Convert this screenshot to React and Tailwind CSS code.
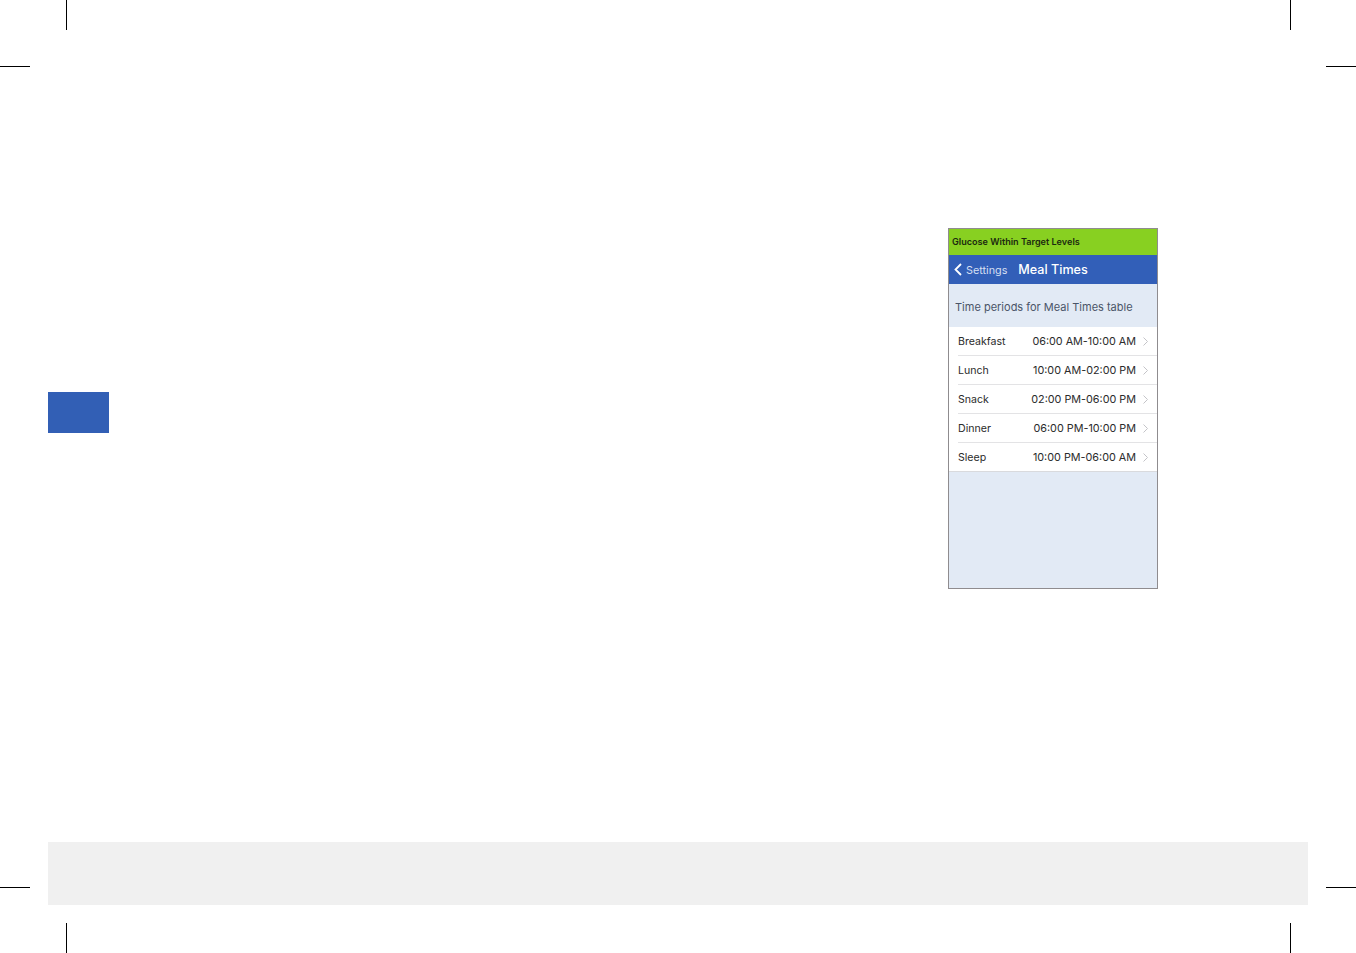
const periods = [
  { name: "Breakfast", time: "06:00 AM-10:00 AM" },
  { name: "Lunch", time: "10:00 AM-02:00 PM" },
  { name: "Snack", time: "02:00 PM-06:00 PM" },
  { name: "Dinner", time: "06:00 PM-10:00 PM" },
  { name: "Sleep", time: "10:00 PM-06:00 AM" },
];

// printer's crop marks sit on the page canvas itself
const cropMarks = [
  "left-[66px] top-0 w-px h-[30px]",
  "left-[1290px] top-0 w-px h-[30px]",
  "left-0 top-[66px] w-[30px] h-px",
  "left-[1326px] top-[66px] w-[30px] h-px",
  "left-0 top-[887px] w-[30px] h-px",
  "left-[1326px] top-[887px] w-[30px] h-px",
  "left-[66px] top-[923px] w-px h-[30px]",
  "left-[1290px] top-[923px] w-px h-[30px]",
];

const BackChevron = () => (
  <svg width="8" height="13" viewBox="0 0 8 13" fill="none" className="ml-[5px] shrink-0">
    <path d="M7 1 L1.5 6.5 L7 12" stroke="#ffffff" strokeWidth="1.8" />
  </svg>
);

const RowChevron = () => (
  <svg width="5" height="9" viewBox="0 0 5 9" fill="none" className="shrink-0">
    <path d="M0.5 0.5 L4.5 4.5 L0.5 8.5" stroke="#c4c4c8" strokeWidth="1" />
  </svg>
);

const PeriodRow = ({ name, time, last }) => (
  <div className={`flex h-[29px] items-center pl-[9px] ${last ? "border-b border-[#d9dadd]" : ""}`}>
    <div className={`flex h-full flex-1 items-center justify-between pr-[9px] ${last ? "" : "border-b border-[#e3e3e5]"}`}>
      <span className="pt-[2px] text-[10.6px] text-[#2b2b2b]">{name}</span>
      <div className="flex items-center gap-[7px]">
        <span className="pt-[2px] text-[10.8px] text-[#2b2b2b]">{time}</span>
        <RowChevron />
      </div>
    </div>
  </div>
);

export default function App() {
  return (
    <div className="relative flex h-[953px] w-full flex-col overflow-hidden bg-white px-[48px] font-['Inter',sans-serif]">
      {cropMarks.map((cls) => (
        <div key={cls} className={`absolute bg-black ${cls}`} />
      ))}

      <div className="flex items-start pt-[228px]">
        <div className="mt-[164px] h-[41px] w-[61px] bg-[#325fb5]" />

        <div className="ml-[839px] flex h-[361px] w-[210px] flex-col border border-[#8f8c8f] bg-[#e2eaf5] text-[11px]">
          <div className="flex h-[26px] items-center bg-[#88d021] pl-[3px] text-[9.1px] font-semibold text-[#1c2a10]">
            Glucose Within Target Levels
          </div>
          <div className="flex h-[29px] items-center bg-[#325fb8] text-white">
            <BackChevron />
            <span className="ml-[4px] mt-[4px] text-[10.8px] text-[#d5dff2]">Settings</span>
            <span className="ml-[11px] mt-[2px] text-[12.6px] font-medium">Meal Times</span>
          </div>
          <div className="flex h-[43px] items-center pl-[6px] pt-[3px] text-[#4a5568]">
            Time periods for Meal Times table
          </div>
          <div className="bg-white">
            {periods.map((p, i) => (
              <PeriodRow key={p.name} name={p.name} time={p.time} last={i === periods.length - 1} />
            ))}
          </div>
        </div>
      </div>

      <div className="mt-[253px] h-[63px] w-full bg-[#f0f0f0]" />
    </div>
  );
}
